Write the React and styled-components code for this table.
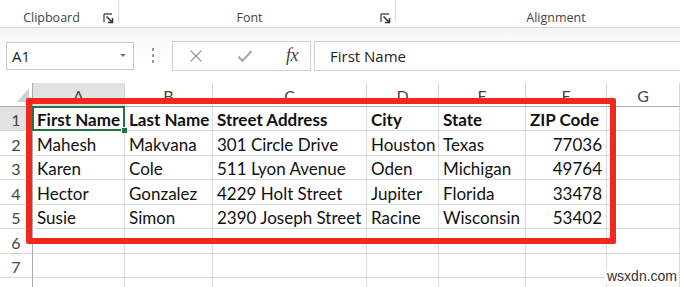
import React from "react";
import styled, { createGlobalStyle } from "styled-components";

const GlobalStyle = createGlobalStyle`
  html, body {
    margin: 0;
    padding: 0;
    background: #fff;
  }
  body {
    width: 680px;
    height: 287px;
    overflow: hidden;
  }
`;

const Page = styled.div`
  position: relative;
  width: 680px;
  height: 287px;
  overflow: hidden;
  background: #fff;
`;

/* ribbon group captions */
const Ribbon = styled.div`
  display: flex;
  height: 27px;
  background: #fff;
  border-bottom: 1px solid #d6d6d6;
  box-shadow: 0 1px 3px rgba(0, 0, 0, 0.08);
  font-family: "Open Sans", "Noto Sans", sans-serif;
  font-size: 12.5px;
  color: #444;
`;

const Group = styled.div`
  position: relative;
  flex: 0 0 ${(p) => p.width}px;
  display: flex;
  align-items: center;
  padding-top: 12px;
  box-sizing: border-box;
  border-right: ${(p) => (p.last ? "none" : "1px solid #d8d8d8")};
  height: 22px;
`;

const GroupLabel = styled.span`
  flex: 1;
  text-align: center;
`;

const Launcher = styled.svg`
  flex: 0 0 11px;
  margin-right: 4px;
  margin-top: 2px;
`;

const DialogLauncher = () => (
  <Launcher width="11" height="11" viewBox="0 0 11 11">
    <path d="M1 1h8M1 1v8" stroke="#555" strokeWidth="1.4" fill="none" />
    <path d="M3.5 3.5l5.5 5.5M5 9.5h4.5V5" stroke="#333" strokeWidth="1.5" fill="none" />
  </Launcher>
);

/* name box + formula bar */
const FormulaRow = styled.div`
  display: flex;
  align-items: center;
  height: 55px;
  padding: 0 0 0 6px;
  box-sizing: border-box;
  background: linear-gradient(#f3f3f3 0px, #fafafa 10px, #fff 45px);
  font-family: "Open Sans", "Noto Sans", sans-serif;
`;

const NameBox = styled.div`
  display: flex;
  align-items: center;
  justify-content: space-between;
  width: 128px;
  height: 28px;
  box-sizing: border-box;
  border: 1px solid #c8c8c8;
  background: #fff;
  padding: 0 7px 0 5px;
  font-size: 15px;
  color: #222;
`;

const Caret = styled.span`
  width: 0;
  height: 0;
  border-left: 3.5px solid transparent;
  border-right: 3.5px solid transparent;
  border-top: 3.5px solid #777;
`;

const Grip = styled.div`
  flex: 0 0 38px;
  display: flex;
  flex-direction: column;
  align-items: center;
  gap: 3px;
`;

const Dot = styled.span`
  width: 2px;
  height: 3px;
  background: #9a9a9a;
`;

const ButtonBox = styled.div`
  display: flex;
  align-items: center;
  width: 139px;
  height: 30px;
  box-sizing: border-box;
  border: 1px solid #d0d0d0;
  background: #fff;
  padding: 0 12px 0 16px;
  justify-content: space-between;
`;

const Fx = styled.span`
  font-family: "Liberation Serif", "DejaVu Serif", serif;
  font-style: italic;
  font-size: 18px;
  color: #444;
  letter-spacing: -0.5px;
`;

const FormulaInput = styled.div`
  flex: 1;
  margin-left: 3px;
  height: 30px;
  box-sizing: border-box;
  border: 1px solid #d0d0d0;
  border-right: none;
  background: #fff;
  display: flex;
  align-items: center;
  padding-left: 15px;
  font-size: 15px;
  color: #222;
`;

/* worksheet */
const Sheet = styled.div`
  display: grid;
  grid-template-columns: 33px 92px 88px 154px 72px 87px 81px 73px;
  grid-template-rows: 24px 24px 25px 24px 25px 24px 25px 24px 25px;
  font-family: "Lato", "Noto Sans", sans-serif;
  font-size: 17px;
  color: #111;
`;

const ColHead = styled.div`
  display: flex;
  align-items: center;
  justify-content: center;
  padding-top: 1px;
  box-sizing: border-box;
  background: ${(p) => (p.active ? "#e2e2e2" : "#fff")};
  border-right: 1px solid #d6d6d6;
  border-bottom: 1px solid #ababab;
  font-size: 16px;
  color: #444;
`;

const Corner = styled.div`
  display: flex;
  align-items: flex-end;
  justify-content: flex-end;
  padding: 0 3px 4px 0;
  box-sizing: border-box;
  border-right: 1px solid #ababab;
  border-bottom: 1px solid #ababab;
`;

const RowHead = styled.div`
  display: flex;
  align-items: center;
  justify-content: center;
  padding-top: 2px;
  box-sizing: border-box;
  background: ${(p) => (p.active ? "#e2e2e2" : "#fff")};
  border-right: 1px solid #ababab;
  border-bottom: 1px solid #d6d6d6;
  font-size: 16px;
  color: #444;
`;

const Cell = styled.div`
  position: relative;
  display: flex;
  align-items: center;
  justify-content: ${(p) => (p.num ? "flex-end" : "flex-start")};
  padding: 2px 4px 0 4px;
  box-sizing: border-box;
  border-right: 1px solid #dadada;
  border-bottom: 1px solid #dadada;
  font-weight: ${(p) => (p.bold ? 700 : 400)};
  white-space: nowrap;
  overflow: visible;

  ${(p) =>
    p.selected &&
    `
    &::after {
      content: "";
      position: absolute;
      left: -1px;
      top: -1px;
      right: -1px;
      bottom: -1px;
      border: 2px solid #217346;
    }
    &::before {
      content: "";
      position: absolute;
      right: -4px;
      bottom: -4px;
      width: 5px;
      height: 5px;
      background: #217346;
      border: 1px solid #fff;
      z-index: 2;
    }
  `}
`;

const Highlight = styled.div`
  position: absolute;
  left: 26px;
  top: 98px;
  width: 590px;
  height: 146px;
  box-sizing: border-box;
  border: 6px solid #f2281d;
  border-radius: 2px;
  pointer-events: none;
`;

const Watermark = styled.div`
  position: absolute;
  left: 605px;
  top: 268px;
  padding: 0 2px;
  background: rgba(255, 255, 255, 0.85);
  font-family: "Liberation Sans", Arial, sans-serif;
  font-size: 14px;
  color: #333;
`;

const columns = ["A", "B", "C", "D", "E", "F", "G"];

const rows = [
  ["First Name", "Last Name", "Street Address", "City", "State", "ZIP Code"],
  ["Mahesh", "Makvana", "301 Circle Drive", "Houston", "Texas", "77036"],
  ["Karen", "Cole", "511 Lyon Avenue", "Oden", "Michigan", "49764"],
  ["Hector", "Gonzalez", "4229 Holt Street", "Jupiter", "Florida", "33478"],
  ["Susie", "Simon", "2390 Joseph Street", "Racine", "Wisconsin", "53402"],
  ["", "", "", "", "", ""],
  ["", "", "", "", "", ""],
  ["", "", "", "", "", ""],
];

const App = () => (
  <Page>
    <GlobalStyle />
    <Ribbon>
      <Group width={119}>
        <GroupLabel>Clipboard</GroupLabel>
        <DialogLauncher />
      </Group>
      <Group width={277}>
        <GroupLabel>Font</GroupLabel>
        <DialogLauncher />
      </Group>
      <Group width={320} last>
        <GroupLabel>Alignment</GroupLabel>
      </Group>
    </Ribbon>

    <FormulaRow>
      <NameBox>
        A1
        <Caret />
      </NameBox>
      <Grip>
        <Dot />
        <Dot />
        <Dot />
      </Grip>
      <ButtonBox>
        <svg width="14" height="14" viewBox="0 0 14 14">
          <path d="M1.5 1.5l11 11M12.5 1.5l-11 11" stroke="#9a9a9a" strokeWidth="1.3" />
        </svg>
        <svg width="16" height="14" viewBox="0 0 16 14">
          <path d="M1.5 7.5l4 4.5L14.5 2" stroke="#a8a8a8" strokeWidth="2" fill="none" />
        </svg>
        <Fx>fx</Fx>
      </ButtonBox>
      <FormulaInput>First Name</FormulaInput>
    </FormulaRow>

    <Sheet>
      <Corner>
        <svg width="12" height="14" viewBox="0 0 12 14">
          <path d="M12 0v14H0z" fill="#d0d0d0" />
        </svg>
      </Corner>
      {columns.map((c) => (
        <ColHead key={c} active={c === "A"}>
          {c}
        </ColHead>
      ))}
      {rows.map((row, r) => (
        <React.Fragment key={r}>
          <RowHead active={r === 0}>{r + 1}</RowHead>
          {row.map((v, c) => (
            <Cell
              key={c}
              bold={r === 0}
              num={r > 0 && c === 5}
              selected={r === 0 && c === 0}
            >
              {v}
            </Cell>
          ))}
          <Cell />
        </React.Fragment>
      ))}
    </Sheet>

    <Highlight />
    <Watermark>wsxdn.com</Watermark>
  </Page>
);

export default App;
